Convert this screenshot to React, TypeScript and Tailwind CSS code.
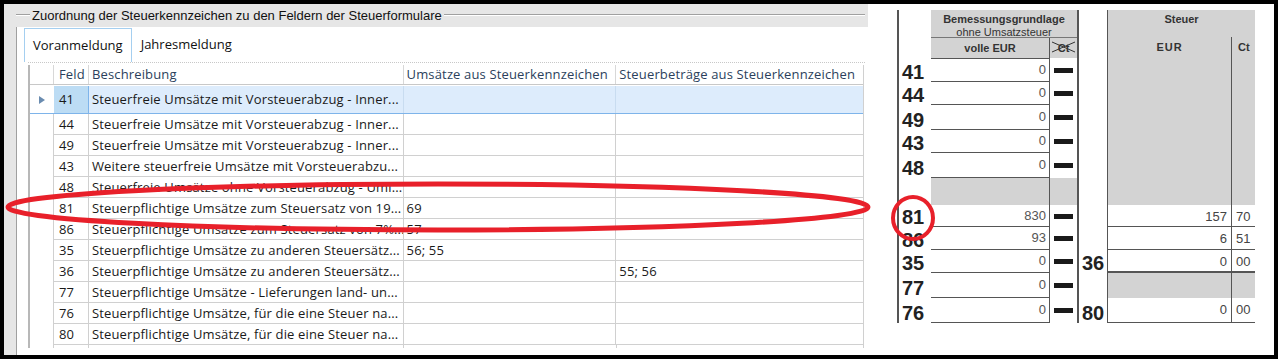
import React from "react";

type Row = { feld: string; text: string; u?: string; s?: string; sel?: boolean };

const rows: Row[] = [
  { feld: "41", text: "Steuerfreie Umsätze mit Vorsteuerabzug - Inner...", sel: true },
  { feld: "44", text: "Steuerfreie Umsätze mit Vorsteuerabzug - Inner..." },
  { feld: "49", text: "Steuerfreie Umsätze mit Vorsteuerabzug - Inner..." },
  { feld: "43", text: "Weitere steuerfreie Umsätze mit Vorsteuerabzu..." },
  { feld: "48", text: "Steuerfreie Umsätze ohne Vorsteuerabzug - Umi..." },
  { feld: "81", text: "Steuerpflichtige Umsätze zum Steuersatz von 19...", u: "69" },
  { feld: "86", text: "Steuerpflichtige Umsätze zum Steuersatz von 7%...", u: "57" },
  { feld: "35", text: "Steuerpflichtige Umsätze zu anderen Steuersätz...", u: "56; 55" },
  { feld: "36", text: "Steuerpflichtige Umsätze zu anderen Steuersätz...", s: "55; 56" },
  { feld: "77", text: "Steuerpflichtige Umsätze - Lieferungen land- un..." },
  { feld: "76", text: "Steuerpflichtige Umsätze, für die eine Steuer na..." },
  { feld: "80", text: "Steuerpflichtige Umsätze, für die eine Steuer na..." },
];

// Formular-Zeilen (Höhen in px)
const H = [24, 23, 25, 23, 25, 27, 22, 23, 23, 25, 25];
const labels = ["41", "44", "49", "43", "48", "", "81", "86", "35", "77", "76"];
const werte = ["0", "0", "0", "0", "0", "", "830", "93", "0", "0", "0"];

const ui = { fontFamily: '"Open Sans", "Noto Sans", sans-serif' };
const arial = { fontFamily: '"Liberation Sans", Arial, sans-serif' };
const narrow = { fontFamily: '"Liberation Sans Narrow", "Arial Narrow", "Liberation Sans", sans-serif' };

function Grid() {
  return (
    <div className="ml-[11px] w-[837px] border-t border-dotted border-[#c8c8c8] pt-[2px] flex">
      <div className="w-[2px] border-l border-r border-[#b8b8b8] bg-[#f4f4f4]" />
      <div className="flex flex-col w-[834px] border-r border-[#d0d0d0] text-[13px] tracking-[0.15px] text-[#1a1a1a]" style={ui}>
        {/* Kopfzeile */}
        <div className="flex h-[20px] border-b border-[#c8c8c8] text-[#2b3f5c] leading-[19px]">
          <div className="w-[24px] border-r border-[#d8d8d8]" />
          <div className="w-[35px] border-r border-[#d8d8d8] pl-[5px]">Feld</div>
          <div className="w-[315px] border-r border-[#d8d8d8] pl-[3px]">Beschreibung</div>
          <div className="w-[213px] border-r border-[#d8d8d8] pl-[3px]">Umsätze aus Steuerkennzeichen</div>
          <div className="w-[247px] pl-[3px]">Steuerbeträge aus Steuerkennzeichen</div>
        </div>
        <div className="h-px" />
        {rows.map((r) =>
          r.sel ? (
            <div key={r.feld} className="flex h-[28px] border-b border-[#7eb4ea] bg-[#ddecfc]">
              <div className="w-[24px] flex items-center justify-center bg-white">
                <svg width="6" height="8" viewBox="0 0 6 8" className="ml-[1px]">
                  <polygon points="0,0 6,4 0,8" fill="#6a8cb0" />
                </svg>
              </div>
              <div className="w-[35px] bg-[#bcdcf4] border-r border-[#7eb4ea] pl-[5px] flex items-center">{r.feld}</div>
              <div className="w-[315px] border-r border-[#c8dcf0] pl-[3px] flex items-center whitespace-nowrap overflow-hidden">{r.text}</div>
              <div className="w-[213px] border-r border-[#c8dcf0]" />
              <div className="w-[247px]" />
            </div>
          ) : (
            <div key={r.feld} className="flex h-[21px] leading-[20px]">
              <div className="w-[24px] border-r border-[#d0d0d0]" />
              <div className="w-[35px] border-r border-b border-[#d0d0d0] pl-[5px]">{r.feld}</div>
              <div className="w-[315px] border-r border-b border-[#d0d0d0] pl-[3px] whitespace-nowrap overflow-hidden">{r.text}</div>
              <div className="w-[213px] border-r border-b border-[#d0d0d0] pl-[3px]">{r.u}</div>
              <div className="w-[247px] border-b border-[#d0d0d0] pl-[3px]">{r.s}</div>
            </div>
          )
        )}
        <div className="flex h-[3px]">
          <div className="w-[24px] border-r border-[#d0d0d0]" />
          <div className="w-[35px] border-r border-[#d0d0d0]" />
          <div className="w-[315px] border-r border-[#d0d0d0]" />
          <div className="w-[213px] border-r border-[#d0d0d0]" />
        </div>
      </div>
    </div>
  );
}

function LeftPanel() {
  return (
    <div className="w-[864px] flex flex-col bg-white">
      {/* Gruppenkopf */}
      <div className="h-[23px] flex bg-[#e6e6e6]">
        <div className="w-[12px]" />
        <div className="w-[14px] flex flex-col pt-[10px]">
          <div className="h-px bg-[#a0a0a0]" />
          <div className="h-px bg-white" />
        </div>
        <div className="px-[2px] text-[13px] leading-[18px] pt-[3px] text-[#111]" style={arial}>
          Zuordnung der Steuerkennzeichen zu den Feldern der Steuerformulare
        </div>
        <div className="flex-1 flex flex-col pt-[10px] mr-[3px]">
          <div className="h-px bg-[#a0a0a0]" />
          <div className="h-px bg-white" />
        </div>
      </div>
      <div className="flex flex-1">
        <div className="w-[12px] bg-[#e6e6e6]" />
        <div className="w-px bg-[#a0a0a0]" />
        <div className="flex-1 flex flex-col">
          {/* Reiter */}
          <div className="h-[35px] flex items-end pl-[7px] text-[13px] text-[#111]" style={ui}>
            <div className="h-[34px] px-[8px] border border-b-0 border-[#a5cff0] bg-white flex items-center">Voranmeldung</div>
            <div className="h-[34px] px-[9px] flex items-center">Jahresmeldung</div>
          </div>
          <Grid />
        </div>
      </div>
    </div>
  );
}

function CtHeader() {
  return (
    <div className="relative w-full h-full flex items-center justify-center text-[11px] font-bold text-[#333]" style={arial}>
      Ct
      <svg className="absolute inset-0" width="27" height="21" viewBox="0 0 27 21">
        <line x1="2" y1="4" x2="25" y2="14" stroke="#333" strokeWidth="1" />
        <line x1="2" y1="14" x2="25" y2="4" stroke="#333" strokeWidth="1" />
      </svg>
    </div>
  );
}

function RightPanel() {
  const greyH = 48 + H.slice(0, 6).reduce((a, b) => a + b, 0);
  return (
    <div className="flex-1 flex pt-[6px] text-[#222]" style={arial}>
      <div className="w-[29px]" />
      <div className="w-[2px] h-[313px] bg-[#555]" />
      {/* Kennzahlen */}
      <div className="w-[32px] flex flex-col">
        <div className="h-[48px]" />
        {H.map((h, i) => (
          <div key={i} style={{ height: h }} className="flex items-end pl-[3px] text-[20px] font-bold leading-none">
            {labels[i]}
          </div>
        ))}
      </div>
      {/* Bemessungsgrundlage */}
      <div className="w-[146px] flex flex-col">
        <div className="h-[48px] bg-[#d3d3d3] flex flex-col text-[#333]">
          <div className="h-[27px] flex flex-col items-center pt-[3px] leading-[13px]">
            <div className="text-[11px] font-bold">Bemessungsgrundlage</div>
            <div className="text-[11px]">ohne Umsatzsteuer</div>
          </div>
          <div className="h-px bg-[#777]" />
          <div className="flex-1 flex">
            <div className="w-[119px] border-r border-[#555] flex items-center justify-center text-[11px] font-bold">volle EUR</div>
            <div className="flex-1">
              <CtHeader />
            </div>
          </div>
        </div>
        {H.map((h, i) =>
          i === 5 ? (
            <div key={i} style={{ height: h }} className="flex bg-[#d3d3d3]">
              <div className="w-[119px] border-r border-[#555]" />
            </div>
          ) : (
            <div key={i} style={{ height: h }} className="flex">
              <div
                className={`w-[119px] border-r border-b border-[#555] ${i === 0 ? "border-t" : ""} flex items-center justify-end pr-[3px] text-[13px] text-[#555]`}
                style={narrow}
              >
                {werte[i]}
              </div>
              <div className="flex-1 flex items-center justify-center">
                <div className="w-[19px] h-[5px] bg-[#1a1a1a]" />
              </div>
            </div>
          )
        )}
      </div>
      <div className="w-[2px] h-[313px] bg-[#555]" />
      {/* Kennzahlen Mitte */}
      <div className="w-[28px] flex flex-col">
        <div style={{ height: greyH }} />
        {H.slice(6).map((h, i) => (
          <div key={i} style={{ height: h }} className="flex items-end pl-[3px] text-[20px] font-bold leading-none">
            {i === 2 ? "36" : i === 4 ? "80" : ""}
          </div>
        ))}
      </div>
      {/* Steuer */}
      <div className="w-[148px] flex flex-col border-l border-[#555] h-[313px]">
        <div style={{ height: greyH }} className="bg-[#d3d3d3] flex flex-col text-[#333]">
          <div className="h-[27px] flex justify-center pt-[3px] text-[11px] font-bold leading-[13px]">Steuer</div>
          <div className="h-[21px] flex">
            <div className="w-[124px] border-r border-[#555] flex items-center justify-center text-[11px] font-bold tracking-[1px]">EUR</div>
            <div className="flex-1 flex items-center pl-[6px] text-[11px] font-bold">Ct</div>
          </div>
          <div className="flex-1 flex">
            <div className="w-[124px] border-r border-[#555]" />
          </div>
        </div>
        {[
          ["157", "70", 22, false],
          ["6", "51", 23, false],
          ["0", "00", 23, true],
          ["", "", 25, false],
          ["0", "00", 25, false],
        ].map(([e, c, h, thick], i) =>
          i === 3 ? (
            <div key={i} style={{ height: h as number }} className="flex bg-[#d3d3d3]">
              <div className="w-[124px] border-r border-[#555]" />
            </div>
          ) : (
            <div
              key={i}
              style={{ height: h as number }}
              className={`flex ${thick ? "border-b-2" : "border-b"} border-[#555] text-[13px] text-[#444]`}
            >
              <div className="w-[124px] border-r border-[#555] flex items-start justify-end pr-[4px] pt-[2px]" style={narrow}>
                {e}
              </div>
              <div className="flex-1 flex items-start pl-[4px] pt-[2px]" style={narrow}>
                {c}
              </div>
            </div>
          )
        )}
      </div>
    </div>
  );
}

export default function App() {
  return (
    <div className="w-[1278px] h-[359px] bg-black p-[4px]">
      <div className="relative w-full h-full bg-white flex overflow-hidden">
        <LeftPanel />
        <RightPanel />
        <svg className="absolute inset-0 pointer-events-none" width="1270" height="351" viewBox="0 0 1270 351">
          <ellipse cx="434" cy="203" rx="430" ry="23" fill="none" stroke="#e8202a" strokeWidth="5" />
          <ellipse cx="909" cy="214" rx="20" ry="21" fill="none" stroke="#e8202a" strokeWidth="4" />
        </svg>
      </div>
    </div>
  );
}
